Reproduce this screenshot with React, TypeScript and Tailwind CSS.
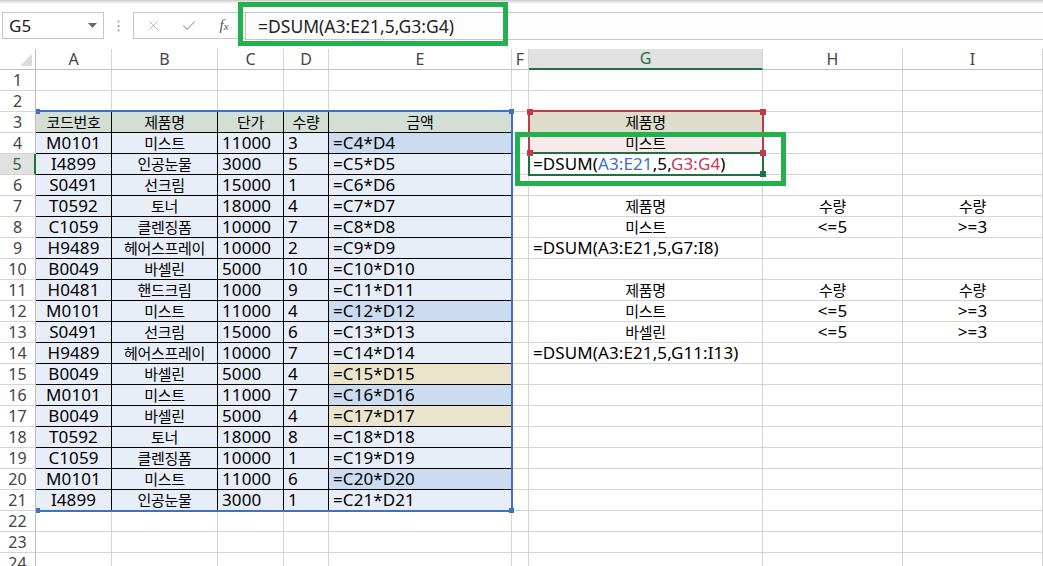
import React from 'react';
import { X, Check } from 'lucide-react';

type C = { t?: React.ReactNode; c?: boolean; bg?: string; k?: boolean; ko?: boolean };

const HDR = 'bg-[#d3dfd5]';
const LB = 'bg-[#e8eef8]';
const DB = 'bg-[#cbdcf0]';
const BE = 'bg-[#ebe4cc]';
const TAN = 'bg-[#dedcca]';
const PINK = 'bg-[#f8eaea]';

const data: [string, string, string, string, string][] = [
  ['M0101', '미스트', '11000', '3', 'b'],
  ['I4899', '인공눈물', '3000', '5', ''],
  ['S0491', '선크림', '15000', '1', ''],
  ['T0592', '토너', '18000', '4', ''],
  ['C1059', '클렌징폼', '10000', '7', ''],
  ['H9489', '헤어스프레이', '10000', '2', ''],
  ['B0049', '바셀린', '5000', '10', ''],
  ['H0481', '핸드크림', '1000', '9', ''],
  ['M0101', '미스트', '11000', '4', 'b'],
  ['S0491', '선크림', '15000', '6', ''],
  ['H9489', '헤어스프레이', '10000', '7', ''],
  ['B0049', '바셀린', '5000', '4', 'y'],
  ['M0101', '미스트', '11000', '7', 'b'],
  ['B0049', '바셀린', '5000', '4', 'y'],
  ['T0592', '토너', '18000', '8', ''],
  ['C1059', '클렌징폼', '10000', '1', ''],
  ['M0101', '미스트', '11000', '6', 'b'],
  ['I4899', '인공눈물', '3000', '1', ''],
];

function buildRows(): C[][] {
  const rows: C[][] = [];
  for (let r = 1; r <= 24; r++) rows.push(Array.from({ length: 9 }, () => ({})));
  const set = (r: number, col: number, c: C) => {
    rows[r - 1][col] = c;
  };
  ['코드번호', '제품명', '단가', '수량', '금액'].forEach((h, i) =>
    set(3, i, { t: h, c: true, bg: HDR, k: true, ko: true })
  );
  data.forEach(([code, name, price, qty, e], i) => {
    const r = i + 4;
    set(r, 0, { t: code, c: true, bg: LB, k: true });
    set(r, 1, { t: name, c: true, bg: LB, k: true, ko: true });
    set(r, 2, { t: price, bg: LB, k: true });
    set(r, 3, { t: qty, bg: LB, k: true });
    set(r, 4, { t: `=C${r}*D${r}`, bg: e === 'b' ? DB : e === 'y' ? BE : LB, k: true });
  });
  set(3, 6, { t: '제품명', c: true, bg: TAN, ko: true });
  set(4, 6, { t: '미스트', c: true, bg: PINK, ko: true });
  set(5, 6, {
    t: (
      <span>
        =DSUM(<span className="text-[#3d6fc7]">A3:E21</span>,5,
        <span className="text-[#c73a55]">G3:G4</span>)
      </span>
    ),
  });
  set(7, 6, { t: '제품명', c: true, ko: true });
  set(7, 7, { t: '수량', c: true, ko: true });
  set(7, 8, { t: '수량', c: true, ko: true });
  set(8, 6, { t: '미스트', c: true, ko: true });
  set(8, 7, { t: '<=5', c: true });
  set(8, 8, { t: '>=3', c: true });
  set(9, 6, { t: '=DSUM(A3:E21,5,G7:I8)' });
  set(11, 6, { t: '제품명', c: true, ko: true });
  set(11, 7, { t: '수량', c: true, ko: true });
  set(11, 8, { t: '수량', c: true, ko: true });
  set(12, 6, { t: '미스트', c: true, ko: true });
  set(12, 7, { t: '<=5', c: true });
  set(12, 8, { t: '>=3', c: true });
  set(13, 6, { t: '바셀린', c: true, ko: true });
  set(13, 7, { t: '<=5', c: true });
  set(13, 8, { t: '>=3', c: true });
  set(14, 6, { t: '=DSUM(A3:E21,5,G11:I13)' });
  return rows;
}

const GRID =
  'grid grid-cols-[36px_76px_106px_66px_45px_183px_17px_234px_140px_140px]';

export default function App() {
  const rows = buildRows();
  const cols = ['A', 'B', 'C', 'D', 'E', 'F', 'G', 'H', 'I'];
  return (
    <div className="relative w-[1043px] h-[566px] overflow-hidden bg-white text-black font-['Noto_Sans','Noto_Sans_CJK_KR',sans-serif]">
      {/* top strip */}
      <div className="h-[1px] bg-[#d2d2d2]" />
      <div className="h-[1px] bg-[#e0e0e0]" />
      <div className="h-[1px] bg-[#ececec]" />
      <div className="h-[1px] bg-[#f6f6f6]" />
      <div className="h-[8px] bg-white" />
      {/* formula bar */}
      <div className="flex h-[28px] items-start">
        <div className="w-[2px]" />
        <div className="w-[102px] h-[27px] border border-[#c6c6c6] bg-white flex items-center justify-between pl-[6px] pr-[6px]">
          <span className="text-[17px] leading-[20px] text-[#222]">G5</span>
          <svg width="9" height="5" viewBox="0 0 9 5">
            <path d="M0 0 L9 0 L4.5 5 Z" fill="#666" />
          </svg>
        </div>
        <div className="w-[29px] h-[27px] flex items-center justify-center">
          <svg width="3" height="12" viewBox="0 0 3 12">
            <rect x="0.5" y="0.5" width="2" height="2" fill="#a8a8a8" />
            <rect x="0.5" y="5" width="2" height="2" fill="#a8a8a8" />
            <rect x="0.5" y="9.5" width="2" height="2" fill="#a8a8a8" />
          </svg>
        </div>
        <div className="w-[112px] h-[27px] border-t border-b border-l border-[#c6c6c6] bg-white flex items-center">
          <div className="w-[38px] flex justify-center">
            <X size={15} strokeWidth={1.6} color="#b5b5b5" />
          </div>
          <div className="w-[34px] flex justify-center">
            <Check size={16} strokeWidth={2} color="#b5b5b5" />
          </div>
          <div className="w-[36px] flex justify-center">
            <span className="font-['Liberation_Serif',serif] italic text-[15px] leading-[18px] text-[#555]">
              f<span className="text-[11px]">x</span>
            </span>
          </div>
        </div>
        <div className="flex-1 h-[28px] border-t border-b border-l border-[#c6c6c6] bg-[#fdfdfd] flex items-center pl-[12px]">
          <span className="text-[17.5px] leading-[20px] text-[#222]">=DSUM(A3:E21,5,G3:G4)</span>
        </div>
      </div>
      <div className="h-[9px] bg-white" />
      {/* column headers */}
      <div className={GRID}>
        <div className="h-[21px] border-b border-r border-b-[#bfbfbf] border-r-[#bdbdbd] relative bg-white">
          <svg className="absolute right-[3px] bottom-[3px]" width="12" height="12" viewBox="0 0 12 12">
            <path d="M12 0 L12 12 L0 12 Z" fill="#dadada" />
          </svg>
        </div>
        {cols.map((c) =>
          c === 'G' ? (
            <div
              key={c}
              className="h-[21px] border-b-2 border-r border-b-[#1e6f42] border-r-[#d4d4d4] bg-[#e1e1e1] text-center text-[16px] leading-[19px] text-[#1e6f42]"
            >
              {c}
            </div>
          ) : (
            <div
              key={c}
              className="h-[21px] border-b border-r border-b-[#bfbfbf] border-r-[#d4d4d4] bg-white text-center text-[16px] leading-[20px] text-[#444]"
            >
              {c}
            </div>
          )
        )}
      </div>
      {/* rows */}
      {rows.map((cells, ri) => {
        const r = ri + 1;
        return (
          <div key={r} className={GRID}>
            {r === 5 ? (
              <div className="h-[21px] border-b border-r-2 border-b-[#d4d4d4] border-r-[#1e6f42] bg-[#e1e1e1] text-center text-[16px] leading-[20px] text-[#1e6f42]">
                {r}
              </div>
            ) : (
              <div className="h-[21px] border-b border-r border-b-[#d4d4d4] border-r-[#bdbdbd] bg-white text-center text-[16px] leading-[20px] text-[#444]">
                {r}
              </div>
            )}
            {cells.map((cell, ci) => (
              <div
                key={ci}
                className={[
                  'h-[21px] border-b border-r whitespace-nowrap overflow-visible leading-[20px]',
                  cell.k ? 'border-black' : 'border-[#d4d4d4]',
                  cell.bg ?? 'bg-white',
                  cell.c ? 'text-center' : 'pl-[4px]',
                  cell.ko ? 'text-[15px] tracking-[-0.3px]' : 'text-[17px] tracking-[0.1px]',
                ].join(' ')}
              >
                {cell.t}
              </div>
            ))}
          </div>
        );
      })}

      {/* blue range A3:E21 */}
      <div className="absolute left-[36px] top-[110px] w-[477px] h-[402px] border-t-2 border-r-2 border-b-2 border-[#3e70c6]" />
      <div className="absolute left-[509px] top-[109px] w-[5px] h-[5px] bg-[#3e70c6]" />
      <div className="absolute left-[509px] top-[508px] w-[5px] h-[5px] bg-[#3e70c6]" />
      <div className="absolute left-[36px] top-[109px] w-[4px] h-[5px] bg-[#3e70c6]" />
      <div className="absolute left-[36px] top-[508px] w-[4px] h-[5px] bg-[#3e70c6]" />

      {/* red range G3:G4 */}
      <div className="absolute left-[528px] top-[110px] w-[236px] h-[44px] border-t-2 border-l-2 border-r-2 border-[#c4394a]" />
      {/* active cell G5 */}
      <div className="absolute left-[528px] top-[152px] w-[236px] h-[24px] border-2 border-[#1e6f42]" />
      <div className="absolute left-[760px] top-[171px] w-[6px] h-[6px] bg-[#1e6f42]" />
      {/* red handles */}
      <div className="absolute left-[527px] top-[109px] w-[6px] h-[6px] bg-[#c4394a]" />
      <div className="absolute left-[760px] top-[109px] w-[6px] h-[6px] bg-[#c4394a]" />
      <div className="absolute left-[527px] top-[150px] w-[6px] h-[6px] bg-[#c4394a]" />
      <div className="absolute left-[760px] top-[150px] w-[6px] h-[6px] bg-[#c4394a]" />

      {/* annotation boxes */}
      <div className="absolute left-[238px] top-[2px] w-[270px] h-[44px] border-[5px] border-[#22b14c]" />
      <div className="absolute left-[515px] top-[132px] w-[271px] h-[54px] border-[5px] border-[#22b14c]" />
    </div>
  );
}
